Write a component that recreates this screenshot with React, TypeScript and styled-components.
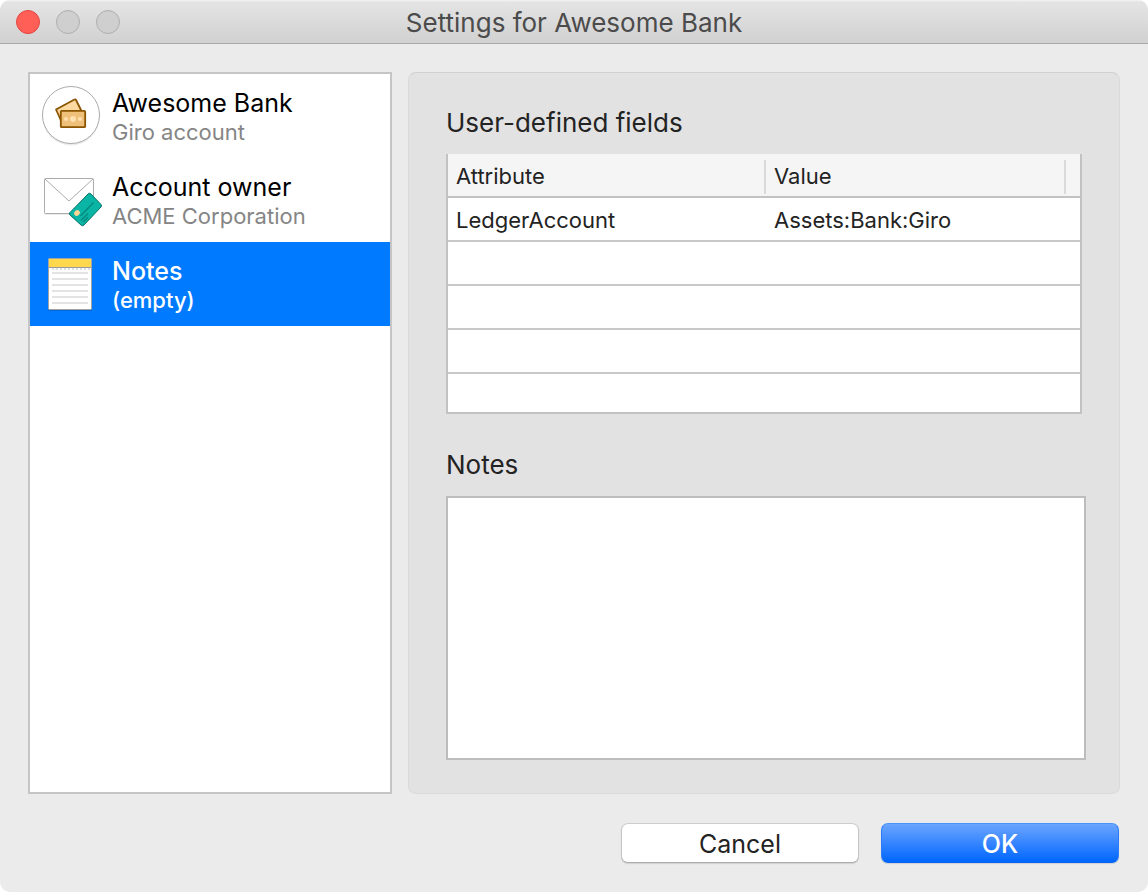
import React from "react";
import styled, { createGlobalStyle } from "styled-components";

const GlobalStyle = createGlobalStyle`
  *, *::before, *::after { box-sizing: border-box; }
  body {
    margin: 0;
    background: #fff;
    font-family: Inter, "Liberation Sans", sans-serif;
    color: #232323;
  }
`;

const Window = styled.div`
  display: flex;
  flex-direction: column;
  min-height: 100vh;
  overflow: hidden;
  border-radius: 10px;
  background: #ebebeb;
`;

const TitleBar = styled.header`
  position: relative;
  display: flex;
  align-items: center;
  justify-content: center;
  height: 44px;
  padding-top: 2px;
  border-bottom: 1px solid #a9a9a9;
  background: linear-gradient(#f4f4f4 0, #e4e4e4 2px, #d1d1d1 100%);
`;

const TrafficLights = styled.div`
  position: absolute;
  left: 16px;
  top: 10px;
  display: flex;
  gap: 16px;
`;

const Light = styled.button<{ $fill: string; $edge: string }>`
  width: 24px;
  height: 24px;
  padding: 0;
  border: 1px solid ${(p) => p.$edge};
  border-radius: 50%;
  background: ${(p) => p.$fill};
`;

const Title = styled.h1`
  margin: 0;
  font-size: 26px;
  line-height: 32px;
  font-weight: 400;
  color: #4b4b4b;
`;

const Main = styled.main`
  display: flex;
  flex: 1;
  gap: 16px;
  padding: 28px 28px 0;
`;

const Sidebar = styled.nav`
  flex: 0 0 364px;
  border: 2px solid #c5c5c5;
  background: #fff;
`;

const Item = styled.button<{ $selected?: boolean }>`
  display: flex;
  align-items: center;
  gap: 10px;
  width: 100%;
  height: 84px;
  padding: 0 12px;
  border: 0;
  font-family: inherit;
  text-align: left;
  color: ${(p) => (p.$selected ? "#fff" : "#000")};
  background: ${(p) => (p.$selected ? "#007aff" : "transparent")};
  font-weight: ${(p) => (p.$selected ? 500 : 400)};
`;

const ItemIcon = styled.svg`
  flex: none;
  width: 60px;
  height: 64px;
`;

const ItemText = styled.span`
  display: flex;
  flex-direction: column;
  padding-top: 2px;
`;

const ItemTitle = styled.span`
  font-size: 25px;
  line-height: 30px;
`;

const ItemDetail = styled.span<{ $selected?: boolean }>`
  font-size: 22px;
  line-height: 28px;
  color: ${(p) => (p.$selected ? "#fff" : "#858585")};
`;

const Panel = styled.section`
  display: flex;
  flex: 1;
  flex-direction: column;
  min-width: 0;
  padding: 33px 33px 33px 37px;
  border: 1px solid #dadada;
  border-top-color: #d0d0d0;
  border-radius: 8px;
  background: #e2e2e2;
`;

const Heading = styled.h2`
  margin: 0 0 14px;
  font-size: 26px;
  line-height: 34px;
  font-weight: 400;
`;

const NotesLabel = styled.label`
  margin: 34px 0 14px;
  font-size: 26px;
  line-height: 34px;
`;

const TableFrame = styled.div`
  height: 260px;
  margin-right: 4px;
  overflow: hidden;
  border: 2px solid #c2c2c2;
  border-top: 0;
  background: #fff;
`;

const Table = styled.table`
  width: 100%;
  border-collapse: separate;
  border-spacing: 0;
  table-layout: fixed;
  font-size: 22px;
  line-height: 32px;
`;

const HeadCell = styled.th<{ $width?: string }>`
  width: ${(p) => p.$width || "auto"};
  height: 44px;
  padding: 6px 0 2px;
  border-bottom: 2px solid #c2c2c2;
  background: #f5f5f5;
  font-weight: 400;
  text-align: left;
`;

const HeadLabel = styled.span<{ $divided?: boolean }>`
  display: block;
  height: 34px;
  padding-left: 8px;
  border-left: ${(p) => (p.$divided ? "2px solid #dadada" : "0")};
`;

const Cell = styled.td<{ $second?: boolean }>`
  height: 44px;
  padding: 2px 0 0 ${(p) => (p.$second ? 10 : 8)}px;
  border-bottom: 2px solid #c8c8c8;
`;

const NotesBox = styled.textarea`
  flex: 1;
  width: 100%;
  min-height: 120px;
  padding: 8px;
  border: 2px solid #bdbdbd;
  border-radius: 0;
  outline: 0;
  resize: none;
  background: #fff;
  font: inherit;
  font-size: 22px;
`;

const Footer = styled.footer`
  display: flex;
  justify-content: flex-end;
  gap: 22px;
  padding: 29px;
`;

const PushButton = styled.button<{ $primary?: boolean }>`
  width: 238px;
  height: 40px;
  padding: 2px 0 0;
  border: 1px solid;
  border-color: ${(p) => (p.$primary ? "#4a93f8 #2a7bf8 #0565f5" : "#cdcdcd #c4c4c4 #aeaeae")};
  border-radius: 7px;
  background: ${(p) => (p.$primary ? "linear-gradient(#6ba5ff, #0066ff)" : "#fff")};
  box-shadow: 0 1px 1px rgba(0, 0, 0, 0.12);
  color: ${(p) => (p.$primary ? "#fff" : "#232323")};
  font-family: inherit;
  font-size: 25px;
  line-height: 36px;
  font-weight: ${(p) => (p.$primary ? 500 : 400)};
`;

const BankIcon = () => (
  <ItemIcon viewBox="0 0 60 64" aria-hidden="true">
    <circle cx="29" cy="33" r="28.5" fill="#000" opacity="0.08" />
    <circle cx="29" cy="31" r="28.5" fill="#fff" stroke="#aaa" />
    <path d="M14 25.5L32.5 15.5Q33.5 15 34 16L41 30L21 41Z" fill="#fcd9a0" stroke="#8b5400" strokeWidth="1.8" strokeLinejoin="round" />
    <rect x="18.8" y="26.8" width="24.4" height="16.4" rx="1" fill="#eec07a" stroke="#8b5400" strokeWidth="1.8" />
    <circle cx="31" cy="35" r="3" fill="#ffe0ae" />
    <circle cx="24" cy="35" r="2" fill="#ffe0ae" />
    <circle cx="38" cy="35" r="2" fill="#ffe0ae" />
  </ItemIcon>
);

const OwnerIcon = () => (
  <ItemIcon viewBox="0 0 60 64" aria-hidden="true">
    <rect x="2" y="11" width="50" height="36" rx="1" fill="#000" opacity="0.08" />
    <rect x="2.5" y="10.5" width="49" height="35" rx="1" fill="#fff" stroke="#ababab" />
    <path d="M3 11L27 33L51 11" fill="none" stroke="#ababab" />
    <path d="M27.5 46L46 26Q47.5 25 49 26L59 36Q60.5 38 59 39L42 57.5Q40.5 59 39 57.5L27.5 47Z" fill="#000" opacity="0.1" />
    <path d="M27.5 45L46 26Q47.5 24.5 49 26L59 36.5Q60 38 59 39L42 57Q40.5 58.5 39 57L28 47Q27 46 27.5 45Z" fill="#0bb5a5" stroke="#06746b" />
    <path d="M38.5 48L51.5 34.5M39 52.5L46 45.5M41 54L46 49.5" stroke="#078a7f" strokeWidth="1.5" />
    <ellipse cx="35" cy="45" rx="3" ry="2.5" transform="rotate(-40 35 45)" fill="#ffd596" />
  </ItemIcon>
);

const NotesIcon = () => (
  <ItemIcon viewBox="0 0 60 64" aria-hidden="true">
    <rect x="6" y="8" width="44" height="51" rx="1" fill="#003a80" opacity="0.3" />
    <rect x="6.5" y="6.5" width="43" height="51" rx="1" fill="#fff" stroke="#a3a3a3" />
    <rect x="7" y="7" width="42" height="8" fill="#ffd84d" />
    <path d="M7 15.5H49" stroke="#9a9a9a" />
    <path d="M10 17H48" stroke="#e0e0e0" strokeWidth="2" strokeDasharray="2 2" />
    <path d="M10 21H46M10 27H46M10 33H46M10 39H46M10 45H46M10 51H46" stroke="#e3e3e3" strokeWidth="2" />
  </ItemIcon>
);

const items = [
  { title: "Awesome Bank", detail: "Giro account", Icon: BankIcon },
  { title: "Account owner", detail: "ACME Corporation", Icon: OwnerIcon },
  { title: "Notes", detail: "(empty)", Icon: NotesIcon, selected: true },
];

const rows = [["LedgerAccount", "Assets:Bank:Giro"], ["", ""], ["", ""], ["", ""], ["", ""]];

export default function App() {
  return (
    <>
      <GlobalStyle />
      <Window>
        <TitleBar>
          <TrafficLights>
            <Light aria-label="Close" $fill="#ff5f57" $edge="#e2463f" />
            <Light aria-label="Minimize" $fill="#cfcfcf" $edge="#aeaeae" />
            <Light aria-label="Zoom" $fill="#cfcfcf" $edge="#aeaeae" />
          </TrafficLights>
          <Title>Settings for Awesome Bank</Title>
        </TitleBar>
        <Main>
          <Sidebar aria-label="Sections">
            {items.map(({ title, detail, Icon, selected }) => (
              <Item key={title} $selected={selected} aria-current={selected ? "page" : undefined}>
                <Icon />
                <ItemText>
                  <ItemTitle>{title}</ItemTitle>
                  <ItemDetail $selected={selected}>{detail}</ItemDetail>
                </ItemText>
              </Item>
            ))}
          </Sidebar>
          <Panel>
            <Heading id="fields-heading">User-defined fields</Heading>
            <TableFrame>
              <Table aria-labelledby="fields-heading">
                <thead>
                  <tr>
                    <HeadCell $width="50%"><HeadLabel>Attribute</HeadLabel></HeadCell>
                    <HeadCell><HeadLabel $divided>Value</HeadLabel></HeadCell>
                    <HeadCell $width="16px"><HeadLabel $divided /></HeadCell>
                  </tr>
                </thead>
                <tbody>
                  {rows.map(([attribute, value], i) => (
                    <tr key={i}>
                      <Cell>{attribute}</Cell>
                      <Cell $second colSpan={2}>{value}</Cell>
                    </tr>
                  ))}
                </tbody>
              </Table>
            </TableFrame>
            <NotesLabel htmlFor="notes">Notes</NotesLabel>
            <NotesBox id="notes" />
          </Panel>
        </Main>
        <Footer>
          <PushButton>Cancel</PushButton>
          <PushButton $primary>OK</PushButton>
        </Footer>
      </Window>
    </>
  );
}
